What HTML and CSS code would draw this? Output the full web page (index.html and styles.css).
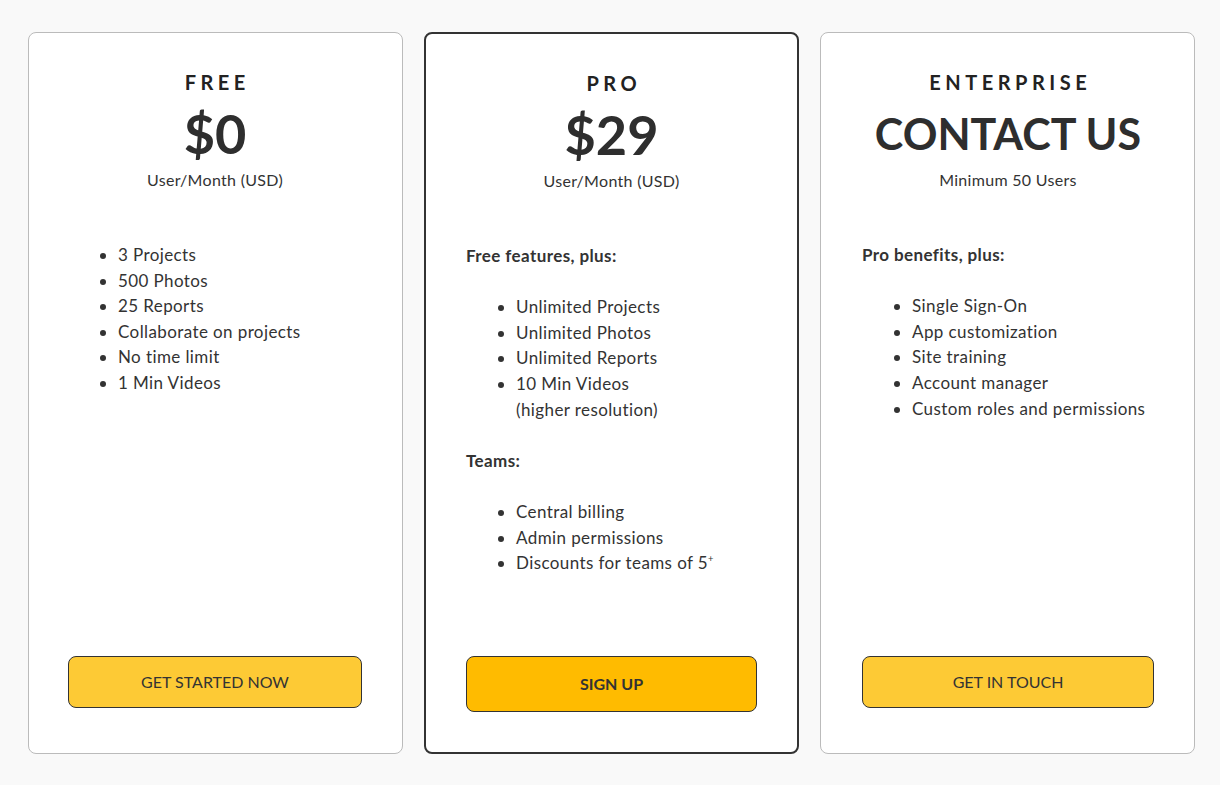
FILE: index.html
```html
<!DOCTYPE html>
<html lang="en">
<head>
    <meta charset="UTF-8">
    <meta name="viewport" content="width=device-width, initial-scale=1.0">
    <title>Pricing</title>
    <link rel="stylesheet" href="styles.css">
</head>
<body>
    <main class="plans">
        <section class="plan">
            <header class="plan-head">
                <h2 class="plan-name">FREE</h2>
                <div class="plan-price">$0</div>
                <p class="plan-unit">User/Month (USD)</p>
            </header>
            <div class="plan-body">
                <ul class="features">
                    <li>3 Projects</li>
                    <li>500 Photos</li>
                    <li>25 Reports</li>
                    <li>Collaborate on projects</li>
                    <li>No time limit</li>
                    <li>1 Min Videos</li>
                </ul>
            </div>
            <a class="plan-btn" href="#">GET STARTED NOW</a>
        </section>

        <section class="plan plan-featured">
            <header class="plan-head">
                <h2 class="plan-name">PRO</h2>
                <div class="plan-price">$29</div>
                <p class="plan-unit">User/Month (USD)</p>
            </header>
            <div class="plan-body">
                <p class="group-title">Free features, plus:</p>
                <ul class="features">
                    <li>Unlimited Projects</li>
                    <li>Unlimited Photos</li>
                    <li>Unlimited Reports</li>
                    <li>10 Min Videos<br>(higher resolution)</li>
                </ul>
                <p class="group-title">Teams:</p>
                <ul class="features">
                    <li>Central billing</li>
                    <li>Admin permissions</li>
                    <li>Discounts for teams of 5<sup>+</sup></li>
                </ul>
            </div>
            <a class="plan-btn" href="#">SIGN UP</a>
        </section>

        <section class="plan">
            <header class="plan-head">
                <h2 class="plan-name">ENTERPRISE</h2>
                <div class="plan-price plan-price-text">CONTACT US</div>
                <p class="plan-unit">Minimum 50 Users</p>
            </header>
            <div class="plan-body">
                <p class="group-title">Pro benefits, plus:</p>
                <ul class="features">
                    <li>Single Sign-On</li>
                    <li>App customization</li>
                    <li>Site training</li>
                    <li>Account manager</li>
                    <li>Custom roles and permissions</li>
                </ul>
            </div>
            <a class="plan-btn" href="#">GET IN TOUCH</a>
        </section>
    </main>
</body>
</html>
```

FILE: styles.css
```css
* {
    box-sizing: border-box;
}

body {
    font-family: 'Lato', 'Open Sans', sans-serif;
    margin: 0;
    padding: 32px 25px 31px 28px;
    height: 100vh;
    background-color: #f9f9f9;
    color: #333;
}

.plans {
    display: grid;
    grid-template-columns: repeat(3, 1fr);
    gap: 21px;
    height: 100%;
}

.plan {
    display: flex;
    flex-direction: column;
    background-color: #fff;
    border: 1px solid #bbb;
    border-radius: 8px;
    padding: 37px 40px 45px;
}

.plan:first-child {
    padding-left: 39px;
}

.plan:last-child {
    padding-left: 41px;
}

.plan-featured {
    border: 2px solid #333;
    padding: 37px 40px 40px;
}

.plan-head {
    text-align: center;
}

.plan-name {
    margin: 0;
    font-size: 20px;
    font-weight: 700;
    letter-spacing: 4.5px;
    line-height: 1.2;
    color: #222;
    padding-left: 4.5px;
}

.plan-price {
    margin-top: 8px;
    font-size: 54px;
    font-weight: 700;
    line-height: 64.8px;
    color: #2e2e2e;
    white-space: nowrap;
}

.plan-price-text {
    font-size: 43px;
}

.plan-unit {
    margin: 3px 0 0;
    font-size: 16px;
    letter-spacing: 0.3px;
    line-height: 1.2;
}

.plan-body {
    margin-top: 53px;
    font-size: 17px;
    letter-spacing: 0.4px;
    line-height: 25.6px;
}

.group-title {
    margin: 0 0 25.6px;
    font-weight: 700;
}

.features {
    margin: 0 0 25.6px;
    padding-left: 50px;
}

.features sup {
    font-size: 0.55em;
    line-height: 0;
}

.plan-btn {
    margin-top: auto;
    display: flex;
    align-items: center;
    justify-content: center;
    height: 52px;
    padding-bottom: 2px;
    background-color: #fdca35;
    border: 1px solid #333;
    border-radius: 8px;
    color: #333;
    font-size: 16px;
    text-decoration: none;
}

.plan-featured .plan-btn {
    height: 56px;
    background-color: #ffbb00;
    font-weight: 700;
}
```
